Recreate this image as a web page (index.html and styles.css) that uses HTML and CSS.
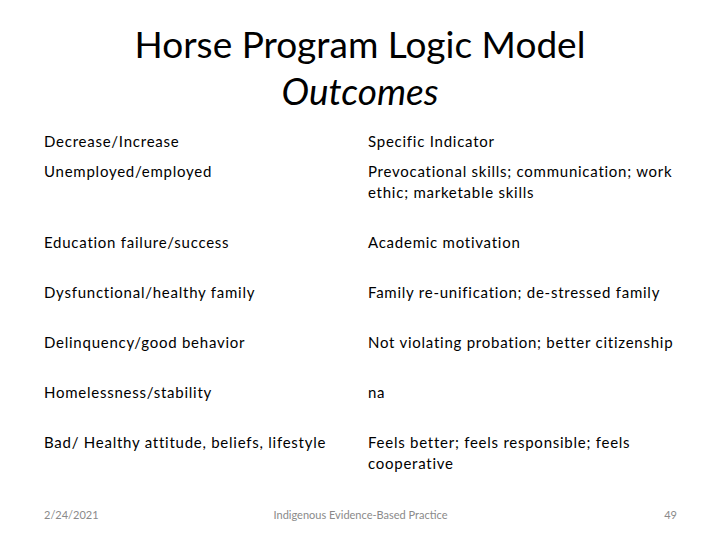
FILE: index.html
```html
<!DOCTYPE html>
<html>
<head>
<meta charset="utf-8">
<link rel="stylesheet" href="styles.css">
</head>
<body>
<div class="slide">
  <h1 class="title">Horse Program Logic Model<br><em>Outcomes</em></h1>
  <div class="table">
    <div class="row head"><div class="c1">Decrease/Increase</div><div class="c2">Specific Indicator</div></div>
    <div class="row"><div class="c1">Unemployed/employed</div><div class="c2">Prevocational skills; communication; work<br>ethic; marketable skills</div></div>
    <div class="row"><div class="c1">Education failure/success</div><div class="c2">Academic motivation</div></div>
    <div class="row"><div class="c1">Dysfunctional/healthy family</div><div class="c2">Family re-unification; de-stressed family</div></div>
    <div class="row"><div class="c1">Delinquency/good behavior</div><div class="c2">Not violating probation; better citizenship</div></div>
    <div class="row"><div class="c1">Homelessness/stability</div><div class="c2">na</div></div>
    <div class="row"><div class="c1">Bad/ Healthy attitude, beliefs, lifestyle</div><div class="c2">Feels better; feels responsible; feels<br>cooperative</div></div>
  </div>
  <div class="footer">
    <div class="f-date">2/24/2021</div>
    <div class="f-mid">Indigenous Evidence-Based Practice</div>
    <div class="f-num">49</div>
  </div>
</div>
</body>
</html>
```
FILE: styles.css
```css
html, body {
  margin: 0;
  padding: 0;
  background: #ffffff;
}
.slide {
  width: 720px;
  height: 540px;
  position: relative;
  font-family: Lato, "Open Sans", sans-serif;
  color: #000;
  display: flex;
  flex-direction: column;
}
.title {
  margin: 0;
  padding-top: 20px;
  font-weight: 400;
  font-size: 37px;
  line-height: 47px;
  text-align: center;
}
.title em {
  font-style: italic;
}
.table {
  margin-top: 17px;
  padding-left: 44px;
  display: flex;
  flex-direction: column;
  font-size: 15px;
  line-height: 21px;
  letter-spacing: 0.75px;
}
.row {
  display: flex;
  padding-bottom: 29px;
}
.row.head {
  padding-bottom: 9px;
}
.c1 {
  width: 324px;
  white-space: nowrap;
}
.c2 {
  white-space: nowrap;
}
.footer {
  position: absolute;
  left: 44px;
  right: 43px;
  top: 507px;
  display: flex;
  justify-content: space-between;
  font-size: 11px;
  line-height: 16px;
  color: #8a8a8a;
}
.f-mid {
  position: absolute;
  left: 0;
  right: 0;
  text-align: center;
}
```
